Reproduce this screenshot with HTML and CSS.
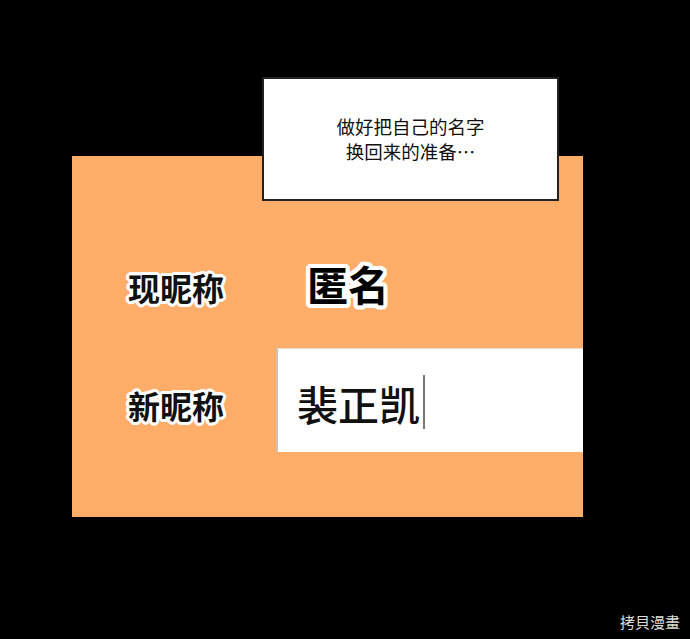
FILE: index.html
```html
<!DOCTYPE html>
<html lang="zh">
<head>
<meta charset="utf-8">
<link rel="stylesheet" href="styles.css">
</head>
<body>
<div class="stage">
  <div class="panel">
    <div class="row row-current">
      <span class="label">现昵称</span>
      <span class="current-name">匿名</span>
    </div>
    <div class="row row-new">
      <span class="label">新昵称</span>
      <div class="input">
        <span class="input-text">裴正凯</span><span class="cursor"></span>
      </div>
    </div>
  </div>
  <div class="bubble">
    <p>做好把自己的名字<br>换回来的准备…</p>
  </div>
  <div class="watermark">拷貝漫畫</div>
</div>
</body>
</html>
```
FILE: styles.css
```css
* { box-sizing: border-box; }
html, body {
  margin: 0;
  padding: 0;
  background: #000;
}
body {
  width: 690px;
  height: 639px;
  overflow: hidden;
  font-family: "Noto Sans CJK SC", "Noto Sans", sans-serif;
}
.stage {
  position: relative;
  width: 690px;
  height: 639px;
  padding-top: 156px;
  padding-left: 72px;
}
.panel {
  width: 511px;
  height: 361px;
  background: #ffad69;
  padding-top: 100px;
  display: flex;
  flex-direction: column;
}
.row {
  display: flex;
  align-items: center;
}
.row-current {
  height: 62px;
}
.row-new {
  margin-top: 30px;
  height: 104px;
}
.label {
  width: 204px;
  padding-left: 56px;
  font-size: 32px;
  font-weight: 700;
  color: #111;
  line-height: 1;
  text-shadow:
    3px 0 0 #fff, -3px 0 0 #fff, 0 3px 0 #fff, 0 -3px 0 #fff,
    2px 2px 0 #fff, -2px 2px 0 #fff, 2px -2px 0 #fff, -2px -2px 0 #fff,
    3px 1px 0 #fff, -3px 1px 0 #fff, 3px -1px 0 #fff, -3px -1px 0 #fff,
    1px 3px 0 #fff, -1px 3px 0 #fff, 1px -3px 0 #fff, -1px -3px 0 #fff,
    0 0 3px #fff;
}
.row-new .label {
  padding-top: 10px;
}
.current-name {
  margin-left: 31px;
  margin-top: -8px;
  font-size: 41px;
  font-weight: 700;
  color: #000;
  line-height: 1;
  text-shadow:
    4px 0 0 #fff, -4px 0 0 #fff, 0 4px 0 #fff, 0 -4px 0 #fff,
    3px 3px 0 #fff, -3px 3px 0 #fff, 3px -3px 0 #fff, -3px -3px 0 #fff,
    4px 2px 0 #fff, -4px 2px 0 #fff, 4px -2px 0 #fff, -4px -2px 0 #fff,
    2px 4px 0 #fff, -2px 4px 0 #fff, 2px -4px 0 #fff, -2px -4px 0 #fff,
    0 0 4px #fff;
}
.input {
  flex: 1;
  height: 104px;
  background: #fff;
  border-left: 2px solid #c9c0b8;
  border-top: 1px solid #e8d9cc;
  display: flex;
  align-items: center;
  padding-left: 19px;
  padding-top: 6px;
}
.input-text {
  font-size: 41px;
  font-weight: 500;
  color: #111;
  line-height: 1;
}
.cursor {
  display: inline-block;
  width: 2px;
  height: 54px;
  background: #777;
  margin-left: 3px;
  margin-top: -4px;
}
.bubble {
  position: absolute;
  left: 262px;
  top: 77px;
  width: 297px;
  height: 124px;
  background: #fff;
  border: 2px solid #222;
  display: flex;
  align-items: center;
  justify-content: center;
}
.bubble p {
  margin: 0;
  text-align: center;
  font-size: 18.5px;
  line-height: 25px;
  color: #111;
  padding-top: 0;
}
.watermark {
  position: absolute;
  right: 10px;
  top: 612px;
  font-family: "Noto Sans CJK TC", "Noto Sans", sans-serif;
  font-size: 15px;
  line-height: 20px;
  color: #dcdcdc;
}
```
